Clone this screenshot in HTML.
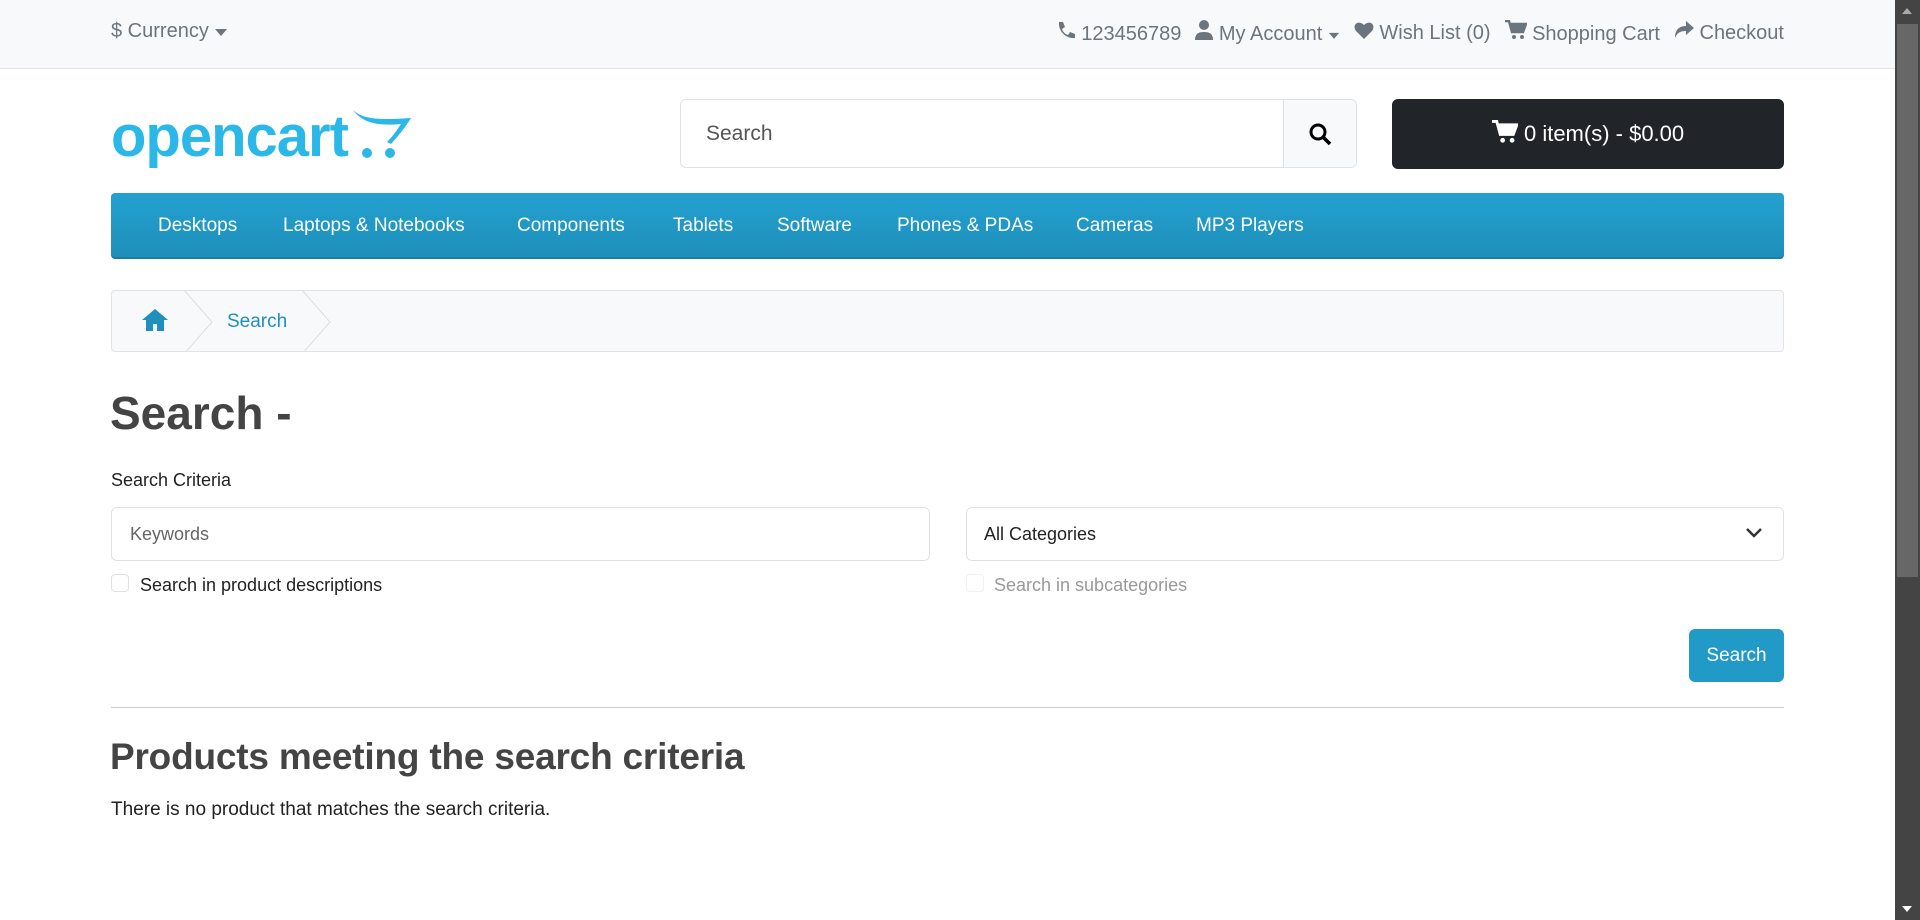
<!DOCTYPE html>
<html><head><meta charset="utf-8">
<style>
*{box-sizing:border-box;margin:0;padding:0}
body{width:1920px;height:920px;overflow:hidden;background:#fff;font-family:"Liberation Sans",sans-serif;color:#222;position:relative}
.a{position:absolute;white-space:nowrap}
.top{left:0;top:0;width:1895px;height:69px;background:#f8f9fa;border-bottom:1px solid #e2e4e8}
.tl{color:#6c757d;font-size:20px;top:20px}
.nav{left:111px;top:193px;width:1673px;height:66px;border-radius:4px;background:linear-gradient(#23a1d1,#1f8fba);border-bottom:2px solid #1b7ca3}
.nav span{position:absolute;top:22px;color:#fff;font-size:19px}
.bc{left:111px;top:290px;width:1673px;height:62px;background:#f8f9fa;border:1px solid #e3e3e3;border-radius:4px;overflow:hidden}
.inp{border:1px solid #dee2e6;border-radius:6px;background:#fff}
</style></head><body>
<div class="a top"></div>
<div class="a tl" style="left:111px">$ Currency <svg width="14" height="10" viewBox="0 0 14 10"><path d="M1 2h12L7 9z" fill="#6c757d"/></svg></div>
<div class="a tl" style="right:136px;display:flex;gap:14px;align-items:center">
<span><svg width="20" height="20" viewBox="0 0 20 20"><path d="M3 2l4 0 2 5-3 2c1 3 3 5 6 6l2-3 5 2v4c-9 1-17-7-16-16z" fill="#6c757d"/></svg> 123456789</span>
<span><svg width="18" height="20" viewBox="0 0 18 20"><circle cx="9" cy="5" r="5" fill="#6c757d"/><path d="M0 20c0-6 3-8 9-8s9 2 9 8z" fill="#6c757d"/></svg> My Account <svg width="12" height="9" viewBox="0 0 14 10"><path d="M1 2h12L7 9z" fill="#6c757d"/></svg></span>
<span><svg width="20" height="18" viewBox="0 0 20 18"><path d="M10 18L2 10C-2 5 3-2 10 4c7-6 12 1 8 6z" fill="#6c757d"/></svg> Wish List (0)</span>
<span><svg width="22" height="20" viewBox="0 0 22 20"><path d="M0 1h4l3 11h11l3-8H6" fill="none" stroke="#6c757d" stroke-width="2.5"/><path d="M6 4h15l-3 8H8z" fill="#6c757d"/><circle cx="9" cy="17" r="2" fill="#6c757d"/><circle cx="17" cy="17" r="2" fill="#6c757d"/></svg> Shopping Cart</span>
<span><svg width="20" height="18" viewBox="0 0 20 18"><path d="M12 0l8 7-8 7v-4C6 10 3 12 1 17 1 9 5 5 12 5z" fill="#6c757d"/></svg> Checkout</span>
</div>
<svg class="a" style="left:111px;top:108px" width="302" height="60" viewBox="0 0 302 60">
<text x="0" y="48" font-family="Liberation Sans" font-weight="bold" font-size="58" fill="#2bb8e8" letter-spacing="-1">opencart</text>
<circle cx="256" cy="45" r="5" fill="#2bb8e8"/><circle cx="279" cy="45" r="5" fill="#2bb8e8"/>
<path d="M242 2c10 10 30 10 58 8c-6 10-13 18-20 26l-4-2c6-6 10-12 14-18c-20 2-38 0-48-14z" fill="#2bb8e8"/>
</svg>
<div class="a inp" style="left:680px;top:99px;width:677px;height:69px;border-radius:6px"></div>
<div class="a" style="left:706px;top:122px;font-size:21px;color:#555">Search</div>
<div class="a" style="left:1283px;top:100px;width:73px;height:67px;background:#f8f9fa;border-left:1px solid #dee2e6;border-radius:0 6px 6px 0"></div>
<svg class="a" style="left:1308px;top:122px" width="24" height="24" viewBox="0 0 24 24"><circle cx="10" cy="10" r="7" fill="none" stroke="#000" stroke-width="3"/><path d="M15 15l7 7" stroke="#000" stroke-width="3.5"/></svg>
<div class="a" style="left:1392px;top:99px;width:392px;height:70px;background:#212529;border-radius:6px;color:#fff;font-size:22px;text-align:center;line-height:70px"><svg width="26" height="24" viewBox="0 0 22 20" style="vertical-align:-3px"><path d="M0 1h4l3 11h11l3-8H6" fill="none" stroke="#fff" stroke-width="2.5"/><path d="M6 4h15l-3 8H8z" fill="#fff"/><circle cx="9" cy="17" r="2" fill="#fff"/><circle cx="17" cy="17" r="2" fill="#fff"/></svg> 0 item(s) - $0.00</div>
<div class="a nav">
<span style="left:47px">Desktops</span><span style="left:172px">Laptops &amp; Notebooks</span><span style="left:406px">Components</span><span style="left:562px">Tablets</span><span style="left:666px">Software</span><span style="left:786px">Phones &amp; PDAs</span><span style="left:965px">Cameras</span><span style="left:1085px">MP3 Players</span>
</div>
<div class="a bc">
<svg class="a" style="left:29px;top:17px" width="28" height="24" viewBox="0 0 28 24"><path d="M14 1L1 12h4v11h7v-7h4v7h7V12h4z" fill="#1f90bb"/></svg>
<svg class="a" style="left:72px;top:-1px" width="40" height="64" viewBox="0 0 40 64"><path d="M0 0l28 32L0 64" fill="none" stroke="#ddd"/></svg>
<div class="a" style="left:115px;top:20px;font-size:19px;color:#1f90bb">Search</div>
<svg class="a" style="left:190px;top:-1px" width="40" height="64" viewBox="0 0 40 64"><path d="M0 0l28 32L0 64" fill="none" stroke="#ddd"/></svg>
</div>
<div class="a" style="left:110px;top:386px;font-size:46px;font-weight:bold;color:#444">Search -</div>
<div class="a" style="left:111px;top:470px;font-size:18px;color:#222">Search Criteria</div>
<div class="a inp" style="left:111px;top:507px;width:819px;height:54px"></div>
<div class="a" style="left:130px;top:524px;font-size:18px;color:#666">Keywords</div>
<div class="a inp" style="left:966px;top:507px;width:818px;height:54px"></div>
<div class="a" style="left:984px;top:524px;font-size:18px;color:#222">All Categories</div>
<svg class="a" style="left:1745px;top:527px" width="18" height="12" viewBox="0 0 18 12"><path d="M2 2l7 7 7-7" fill="none" stroke="#333" stroke-width="2.5"/></svg>
<div class="a inp" style="left:111px;top:574px;width:18px;height:18px;border-radius:4px"></div>
<div class="a" style="left:140px;top:575px;font-size:18px;color:#222">Search in product descriptions</div>
<div class="a inp" style="left:966px;top:574px;width:18px;height:18px;border-radius:4px;opacity:.5"></div>
<div class="a" style="left:994px;top:575px;font-size:18px;color:#999">Search in subcategories</div>
<div class="a" style="left:1689px;top:629px;width:95px;height:53px;background:#229ac8;border-radius:6px;color:#fff;font-size:19px;text-align:center;line-height:53px">Search</div>
<div class="a" style="left:111px;top:707px;width:1673px;height:1px;background:#ccc"></div>
<div class="a" style="left:110px;top:736px;font-size:37px;font-weight:bold;color:#444;letter-spacing:-.2px">Products meeting the search criteria</div>
<div class="a" style="left:111px;top:799px;font-size:19px;color:#222">There is no product that matches the search criteria.</div>
<div class="a" style="left:1895px;top:0;width:25px;height:920px;background:#444"></div>
<div class="a" style="left:1897px;top:24px;width:21px;height:553px;background:#676767"></div>
<svg class="a" style="left:1900px;top:6px" width="14" height="10" viewBox="0 0 14 10"><path d="M2 8h10L7 2z" fill="#aaa"/></svg>
<svg class="a" style="left:1900px;top:904px" width="14" height="10" viewBox="0 0 14 10"><path d="M2 2h10L7 8z" fill="#fff"/></svg>
</body></html>
